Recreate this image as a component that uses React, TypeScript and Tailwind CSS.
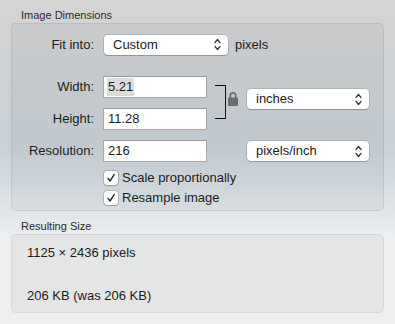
import type { ReactNode } from "react";

function Chevrons() {
    return (
        <svg width="7" height="13" viewBox="0 0 7 13" fill="none" stroke="#3a3a3a" strokeWidth="1.3" strokeLinecap="round" strokeLinejoin="round">
            <path d="M1 4.5 L3.5 1.5 L6 4.5" />
            <path d="M1 8.5 L3.5 11.5 L6 8.5" />
        </svg>
    );
}

function PopUp({ label, width }: { label: string; width: string }) {
    return (
        <div className={`${width} h-[20px] flex items-center justify-between pl-[9px] pr-[7px] bg-white rounded-[4px] shadow-[0_0_0_0.5px_rgba(0,0,0,0.22),0_1px_1px_rgba(0,0,0,0.18)]`}>
            <span className="leading-[16px]">{label}</span>
            <Chevrons />
        </div>
    );
}

function Field({ children }: { children: ReactNode }) {
    return (
        <div className="ml-[9px] w-[104px] h-[22px] flex items-center px-[3px] bg-white border border-[#a8a8a8] border-t-[#9a9a9a]">
            {children}
        </div>
    );
}

function Label({ text }: { text: string }) {
    return <span className="w-[82px] text-right leading-[16px]">{text}</span>;
}

function Check({ text }: { text: string }) {
    return (
        <div className="flex items-center h-[14px] ml-[92px]">
            <div className="w-[14px] h-[14px] flex items-center justify-center bg-white rounded-[3px] shadow-[0_0_0_0.5px_rgba(0,0,0,0.3),0_1px_1px_rgba(0,0,0,0.15)]">
                <svg width="10" height="10" viewBox="0 0 10 10" fill="none" stroke="#2b2b2b" strokeWidth="1.4" strokeLinecap="round" strokeLinejoin="round">
                    <path d="M2 5.4 L4 8 L8.2 1.6" />
                </svg>
            </div>
            <span className="ml-[4px] leading-[16px]">{text}</span>
        </div>
    );
}

function Lock() {
    return (
        <svg width="10" height="15" viewBox="0 0 10 15">
            <path d="M2.3 7 V4.6 A2.7 2.7 0 0 1 7.7 4.6 V7" fill="none" stroke="#6c6c6c" strokeWidth="1.6" />
            <rect x="0" y="6.5" width="10" height="8.5" rx="1" fill="#6c6c6c" />
        </svg>
    );
}

export default function App() {
    return (
        <div className="w-[395px] h-[324px] px-[11px] pt-[9px] bg-[linear-gradient(180deg,#d4d4d4_0%,#cdd1d4_25%,#c9d1d7_45%,#dce2e6_62%,#eeeff0_74%,#efefef_100%)] font-['Liberation_Sans',Arial,sans-serif] text-[13px] text-[#1c1c1c]">
            <div className="pl-[10px] text-[11px] leading-[13px] text-[#2a2a2a]">Image Dimensions</div>
            <div className="mt-[1px] h-[188px] rounded-[5px] border border-black/[0.07] bg-black/[0.035] pt-[10px]">
                <div className="flex items-center h-[21px]">
                    <Label text="Fit into:" />
                    <div className="ml-[10px]">
                        <PopUp label="Custom" width="w-[124px]" />
                    </div>
                    <span className="ml-[7px] leading-[16px]">pixels</span>
                </div>

                <div className="flex mt-[21px]">
                    <div className="flex flex-col gap-[10px]">
                        <div className="flex items-center">
                            <Label text="Width:" />
                            <Field>
                                <span className="bg-[#dcdcdc] px-[1px] leading-[18px]">5.21</span>
                            </Field>
                        </div>
                        <div className="flex items-center">
                            <Label text="Height:" />
                            <Field>
                                <span className="px-[1px] leading-[18px]">11.28</span>
                            </Field>
                        </div>
                    </div>
                    <div className="ml-[8px] mt-[9px] w-[11px] h-[34px] border-t border-r border-b border-[#111]" />
                    <div className="ml-[2px] mt-[15px]">
                        <Lock />
                    </div>
                    <div className="ml-[9px] mt-[13px]">
                        <PopUp label="inches" width="w-[122px]" />
                    </div>
                </div>

                <div className="flex items-center mt-[10px]">
                    <Label text="Resolution:" />
                    <Field>
                        <span className="px-[1px] leading-[18px]">216</span>
                    </Field>
                    <div className="ml-[40px]">
                        <PopUp label="pixels/inch" width="w-[122px]" />
                    </div>
                </div>

                <div className="mt-[9px] flex flex-col gap-[6px]">
                    <Check text="Scale proportionally" />
                    <Check text="Resample image" />
                </div>
            </div>

            <div className="mt-[9px] pl-[10px] text-[11px] leading-[13px] text-[#2a2a2a]">Resulting Size</div>
            <div className="mt-[1px] h-[79px] rounded-[5px] border border-black/[0.06] bg-black/[0.04] pt-[10px] pl-[15px]">
                <div className="leading-[16px]">1125 × 2436 pixels</div>
                <div className="mt-[27px] leading-[16px]">206 KB (was 206 KB)</div>
            </div>
        </div>
    );
}
